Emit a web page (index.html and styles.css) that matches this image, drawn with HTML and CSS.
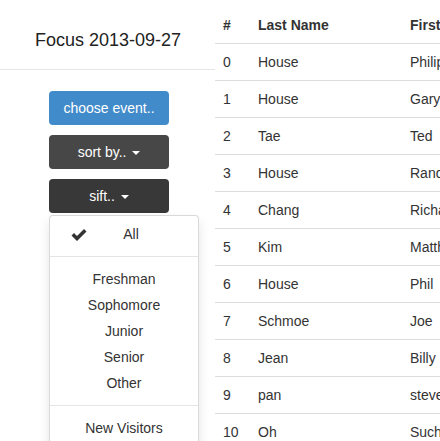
FILE: index.html
```html
<!DOCTYPE html>
<html>
<head>
<meta charset="utf-8">
<link rel="stylesheet" href="styles.css">
</head>
<body>
<div class="page">
  <aside class="sidebar">
    <div class="title-bar"><h1 class="title">Focus 2013-09-27</h1></div>
    <div class="controls">
      <button class="btn btn-primary">choose event..</button>
      <button class="btn btn-dark">sort by.. <span class="caret"></span></button>
      <div class="dropdown">
        <button class="btn btn-dark btn-active">sift.. <span class="caret"></span></button>
        <ul class="menu">
          <li class="item item-checked">
            <svg class="check" viewBox="0 0 16 12" width="16" height="12"><path d="M0.5 6.5 L3 4 L6 7 L13 0 L15.5 2.5 L6 12 Z" fill="#333"/></svg>
            <span class="all">All</span>
          </li>
          <li class="divider"></li>
          <li class="item">Freshman</li>
          <li class="item">Sophomore</li>
          <li class="item">Junior</li>
          <li class="item">Senior</li>
          <li class="item">Other</li>
          <li class="divider"></li>
          <li class="item">New Visitors</li>
        </ul>
      </div>
    </div>
  </aside>
  <main class="content">
    <table class="table">
      <thead>
        <tr><th class="c-num">#</th><th class="c-last">Last Name</th><th class="c-first">First Name</th></tr>
      </thead>
      <tbody>
        <tr><td>0</td><td>House</td><td>Philip</td></tr>
        <tr><td>1</td><td>House</td><td>Gary</td></tr>
        <tr><td>2</td><td>Tae</td><td>Ted</td></tr>
        <tr><td>3</td><td>House</td><td>Randy</td></tr>
        <tr><td>4</td><td>Chang</td><td>Richard</td></tr>
        <tr><td>5</td><td>Kim</td><td>Matthew</td></tr>
        <tr><td>6</td><td>House</td><td>Phil</td></tr>
        <tr><td>7</td><td>Schmoe</td><td>Joe</td></tr>
        <tr><td>8</td><td>Jean</td><td>Billy</td></tr>
        <tr><td>9</td><td>pan</td><td>steve</td></tr>
        <tr><td>10</td><td>Oh</td><td>Such</td></tr>
      </tbody>
    </table>
  </main>
</div>
</body>
</html>
```

FILE: styles.css
```css
html, body {
  margin: 0;
  padding: 0;
  background: #fff;
  font-family: "Liberation Sans", Arial, sans-serif;
  font-size: 14px;
  color: #333;
  overflow: hidden;
}
.page {
  display: flex;
  width: 440px;
  height: 441px;
  overflow: hidden;
}
.sidebar {
  width: 215px;
  flex: none;
  display: flex;
  flex-direction: column;
}
.title-bar {
  height: 70px;
  border-bottom: 1px solid #e5e5e5;
  display: flex;
  align-items: flex-start;
  justify-content: center;
  box-sizing: border-box;
  padding: 30px 0 0 1px;
}
.title {
  margin: 0;
  font-size: 18px;
  font-weight: normal;
  color: #222;
  line-height: 20px;
}
.controls {
  padding: 21px 0 0 49px;
  display: flex;
  flex-direction: column;
  gap: 10px;
  align-items: flex-start;
}
.btn {
  width: 120px;
  height: 34px;
  border: none;
  border-radius: 4px;
  color: #fff;
  font-family: "Liberation Sans", Arial, sans-serif;
  font-size: 14px;
  padding: 0;
  text-align: center;
  line-height: 34px;
}
.btn-primary { background: #428bca; }
.btn-dark { background: #474747; }
.btn-active { background: #383838; }
.caret {
  display: inline-block;
  width: 0;
  height: 0;
  border-top: 4px solid #fff;
  border-left: 4px solid transparent;
  border-right: 4px solid transparent;
  vertical-align: middle;
  margin-left: 2px;
}
.dropdown {
  position: relative;
}
.menu {
  position: absolute;
  top: 36px;
  left: 0;
  width: 150px;
  margin: 0;
  padding: 5px 0;
  list-style: none;
  background: #fff;
  border: 1px solid rgba(0,0,0,0.15);
  border-radius: 4px;
  box-shadow: 0 6px 12px rgba(0,0,0,0.1);
  box-sizing: border-box;
}
.item {
  line-height: 26px;
  height: 26px;
  text-align: center;
  color: #333;
  position: relative;
}
.item-checked .all {
  padding-left: 14px;
}
.check {
  position: absolute;
  left: 21px;
  top: 8px;
}
.divider {
  height: 1px;
  margin: 9px 0;
  background: #e5e5e5;
}
.content {
  flex: 1;
  overflow: hidden;
  padding-top: 7px;
}
.table {
  border-collapse: collapse;
  width: 400px;
  table-layout: fixed;
}
.table th, .table td {
  padding: 8px;
  line-height: 20px;
  text-align: left;
  white-space: nowrap;
  overflow: hidden;
  border-bottom: 1px solid #ddd;
}
.table th { font-weight: bold; color: #333; }
.c-num { width: 19px; }
.c-last { width: 136px; }
.c-first { width: 200px; }
```
